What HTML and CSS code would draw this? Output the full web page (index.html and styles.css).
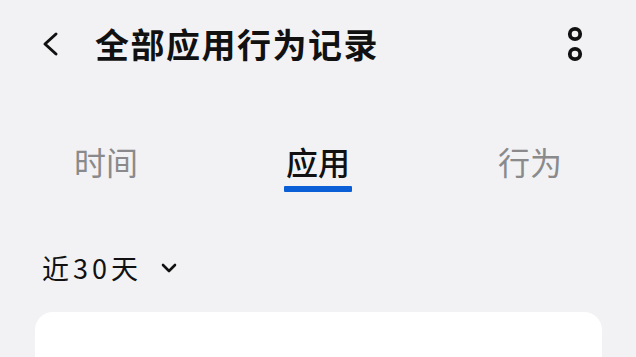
FILE: index.html
```html
<!DOCTYPE html>
<html lang="zh-CN">
<head>
  <meta charset="UTF-8">
  <meta name="viewport" content="width=device-width, initial-scale=1.0">
  <title>全部应用行为记录</title>
  <link rel="stylesheet" href="styles.css">
</head>
<body>

  <div class="header">
    <svg class="back" width="22" height="26" viewBox="0 0 22 26">
      <path d="M16 3 L5 13 L16 23" fill="none" stroke="#111" stroke-width="3" stroke-linecap="round" stroke-linejoin="round"/>
    </svg>
    <h1 class="title">全部应用行为记录</h1>
    <svg class="more" width="20" height="36" viewBox="0 0 20 36">
      <circle cx="10" cy="8" r="5.2" fill="none" stroke="#111" stroke-width="3.8"/>
      <circle cx="10" cy="28" r="5.2" fill="none" stroke="#111" stroke-width="3.8"/>
    </svg>
  </div>

  <div class="tabs">
    <div class="tab">时间</div>
    <div class="tab active">应用<span class="bar"></span></div>
    <div class="tab">行为</div>
  </div>

  <div class="filter">
    <span>近30天</span>
    <svg width="18" height="12" viewBox="0 0 18 12">
      <path d="M3 3 L9 9 L15 3" fill="none" stroke="#111" stroke-width="2.6" stroke-linecap="round" stroke-linejoin="round"/>
    </svg>
  </div>

  <div class="card"></div>

</body>
</html>
```

FILE: styles.css
```css
body { margin: 0; background: #f2f2f4; font-family: "Noto Sans CJK SC", "Noto Sans", sans-serif; color: #111; overflow: hidden; }
.header { display: flex; align-items: center; height: 88px; padding: 0 51px 0 40px; }
.back { flex: none; }
.title { flex: 1; margin: 0 0 0 33px; font-size: 34px; font-weight: 700; letter-spacing: 1.5px; line-height: 1; }
.more { flex: none; }
.tabs { display: flex; margin-top: 53px; }
.tab { flex: 1; display: flex; flex-direction: column; align-items: center; font-size: 32px; line-height: 40px; color: #8a8a8c; }
.tab.active { color: #111; font-weight: 500; }
.bar { display: block; width: 68px; height: 6px; margin-top: 5px; background: #0b5fd6; border-radius: 1px; }
.tab:not(.active)::after { content: ""; display: block; height: 11px; }
.filter { display: flex; align-items: center; gap: 18px; margin: 59px 0 0 42px; font-size: 27px; line-height: 34px; letter-spacing: 4px; }
.card { margin: 27px 34px 0 35px; height: 200px; background: #fff; border-radius: 18px; }
```
